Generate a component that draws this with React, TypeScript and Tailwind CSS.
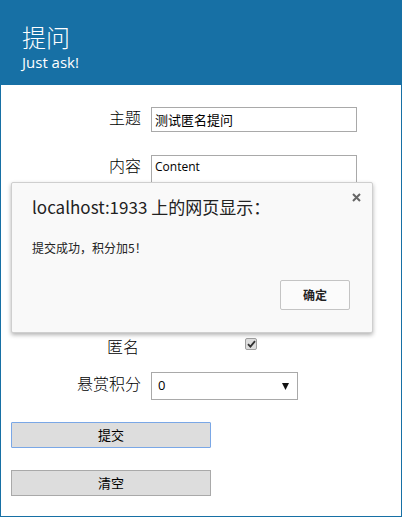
import React from "react";

const cjk = { fontFamily: '"Noto Sans CJK SC", "Noto Sans", sans-serif' };

export default function App() {
  return (
    <div className="relative w-[403px] h-[519px] bg-white" style={cjk}>
      <div className="w-[402px] h-[517px] border-x border-b border-[#1770a5] flex flex-col">
        <div className="h-[85px] bg-[#1770a5] -mx-px pl-[22px] pt-[21px] text-white flex flex-col">
          <div className="text-[24px] leading-[32px] font-light">提问</div>
          <div className="text-[15px] leading-[20px] -mt-[1px]" style={{ fontFamily: '"Open Sans", "Noto Sans", sans-serif' }}>
            Just ask!
          </div>
        </div>

        <div className="pt-[22px] grid grid-cols-[140px_206px] gap-x-[10px] text-[16px] text-black font-light">
          <div className="text-right leading-[20px]">主题</div>
          <div className="h-[25px] border border-[#a9a9a9] pl-[3px] text-[13px] leading-[23px] font-normal">测试匿名提问</div>

          <div className="text-right leading-[20px] mt-[23px]">内容</div>
          <div className="h-[161px] mt-[23px] border border-[#a9a9a9] pl-[3px] pt-[4px] text-[12px] leading-[14px] font-normal" style={{ fontFamily: '"Open Sans", "Noto Sans", sans-serif' }}>
            Content
          </div>

          <div className="text-right leading-[16px] mt-[22px] pr-[2px]">匿名</div>
          <div className="mt-[22px] flex pl-[94px]">
            <div className="w-[12px] h-[12px] rounded-[2px] border border-[#a0a0a0] bg-[#dedede] flex items-center justify-center">
              <svg width="9" height="8" viewBox="0 0 9 8">
                <path d="M1 4.2 L3.4 6.6 L8 1.2" stroke="#333" strokeWidth="1.8" fill="none" />
              </svg>
            </div>
          </div>

          <div className="text-right leading-[20px] mt-[19px]">悬赏积分</div>
          <div className="mt-[18px] w-[147px] h-[28px] border border-[#a9a9a9] flex items-center justify-between pl-[6px] pr-[8px] text-[13px] font-normal">
            <span style={{ fontFamily: '"Open Sans", "Noto Sans", sans-serif' }}>0</span>
            <svg width="7" height="7" viewBox="0 0 7 7">
              <path d="M0 0 H7 L3.5 7 Z" fill="#111" />
            </svg>
          </div>
        </div>

        <div className="pl-[10px] pt-[22px] flex flex-col gap-[22px]">
          <div className="w-[200px] h-[26px] bg-[#dddddd] border border-[#7aa7e6] rounded-[1px] flex items-center justify-center text-[13px]">提交</div>
          <div className="w-[200px] h-[26px] bg-[#dddddd] border border-[#a9a9a9] flex items-center justify-center text-[13px]">清空</div>
        </div>
      </div>

      <div className="absolute left-[11px] top-[182px] w-[362px] h-[151px] bg-[#f9f9f9] border border-[#cfcfcf] rounded-[2px] shadow-[0_2px_4px_rgba(0,0,0,0.3)]">
        <div className="absolute left-[20px] top-[10px] text-[17px] leading-[28px] text-[#222]">localhost:1933 上的网页显示：</div>
        <div className="absolute right-[11px] top-[10px]">
          <svg width="9" height="9" viewBox="0 0 9 9">
            <path d="M1 1 L8 8 M8 1 L1 8" stroke="#666" strokeWidth="2" />
          </svg>
        </div>
        <div className="absolute left-[20px] top-[56px] text-[12px] leading-[18px] text-[#222]">提交成功，积分加5！</div>
        <div className="absolute left-[268px] top-[97px] w-[70px] h-[30px] bg-[#fbfbfb] border border-[#c4c4c4] rounded-[2px] flex items-center justify-center text-[12px] font-bold text-[#222]">
          确定
        </div>
      </div>
    </div>
  );
}
